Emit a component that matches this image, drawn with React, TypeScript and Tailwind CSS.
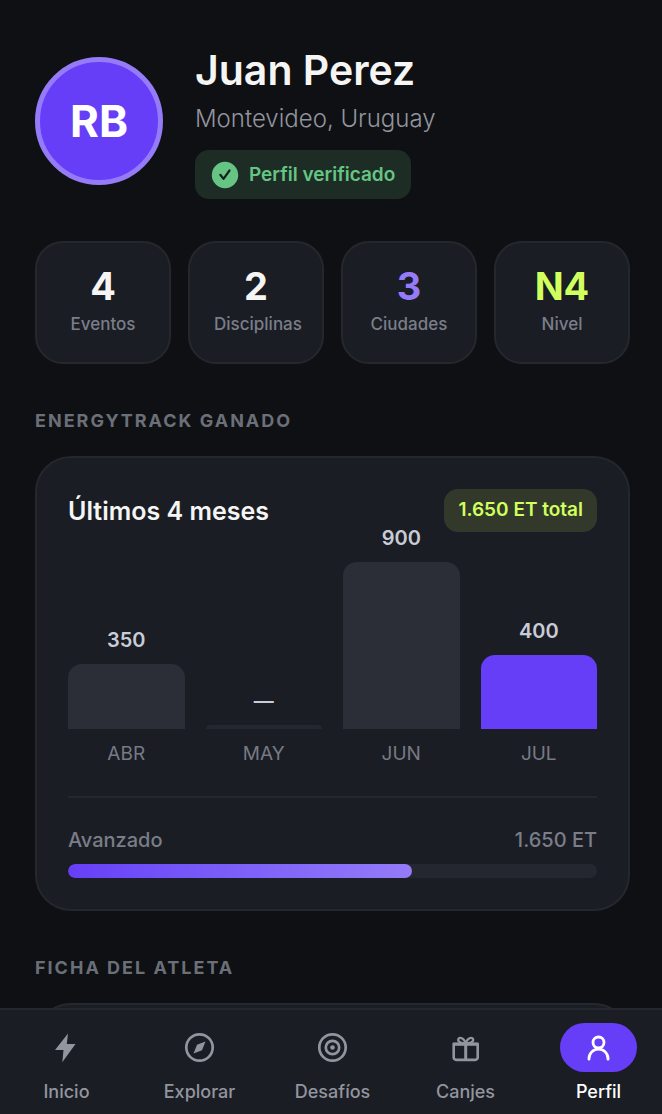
import type { ReactNode } from 'react';

const stats = [
  { value: '4', label: 'Eventos', color: 'text-[#f5f5f3]' },
  { value: '2', label: 'Disciplinas', color: 'text-[#f5f5f3]' },
  { value: '3', label: 'Ciudades', color: 'text-[#957bf8]' },
  { value: 'N4', label: 'Nivel', color: 'text-[#d1ff5e]' },
];

const months = [
  { name: 'ABR', value: '350', height: 65, color: 'bg-[#2b2e36]' },
  { name: 'MAY', value: '—', height: 4, color: 'bg-[#24272f]' },
  { name: 'JUN', value: '900', height: 167, color: 'bg-[#2b2e36]' },
  { name: 'JUL', value: '400', height: 74, color: 'bg-[#673ef8]' },
];

function BoltIcon() {
  return (
    <svg width="32" height="32" viewBox="0 0 32 32" fill="currentColor" aria-hidden="true">
      <path d="M17 1.500 4 18h8.500l-1.200 12.300L24.500 12h-8.700z" />
    </svg>
  );
}

function CompassIcon() {
  return (
    <svg width="32" height="32" viewBox="0 0 32 32" fill="none" aria-hidden="true">
      <circle cx="15.500" cy="15.500" r="13.2" stroke="currentColor" strokeWidth="2.7" />
      <path d="M21.500 9.500 13 12.700 9.500 21.500 18 18.300z" fill="currentColor" />
    </svg>
  );
}

function TargetIcon() {
  return (
    <svg width="32" height="32" viewBox="0 0 32 32" fill="none" stroke="currentColor" strokeWidth="2.7" aria-hidden="true">
      <circle cx="15.500" cy="15.500" r="13.2" />
      <circle cx="15.500" cy="15.500" r="6.7" />
      <circle cx="15.500" cy="15.500" r="2.300" fill="currentColor" stroke="none" />
    </svg>
  );
}

function GiftIcon() {
  return (
    <svg width="32" height="32" viewBox="0 0 32 32" fill="none" stroke="currentColor" strokeLinejoin="round" aria-hidden="true">
      <path d="M3.700 11.700h24v13.800a2.400 2.400 0 0 1-2.400 2.400H6.100a2.400 2.400 0 0 1-2.400-2.400z" strokeWidth="2.600" />
      <path d="M3.700 12.300h24" strokeWidth="3" />
      <path d="M15.700 11.700v16" strokeWidth="3" />
      <path d="M15.700 11.500C10.700 11.500 7.500 9.500 8.300 7 9.500 4.600 14.200 6 15.700 11.500ZM15.700 11.500c5 0 8.200-2 7.400-4.500C21.900 4.600 17.200 6 15.700 11.500Z" strokeWidth="2.200" />
    </svg>
  );
}

function PersonIcon() {
  return (
    <svg width="32" height="32" viewBox="0 0 32 32" fill="none" stroke="currentColor" strokeWidth="2.8" strokeLinecap="round" aria-hidden="true">
      <circle cx="15.500" cy="10.500" r="5.500" />
      <path d="M6 27.200v-.600a9.500 9.500 0 0 1 19 0v.600" />
    </svg>
  );
}

const tabs = [
  { label: 'Inicio', icon: BoltIcon },
  { label: 'Explorar', icon: CompassIcon },
  { label: 'Desafíos', icon: TargetIcon },
  { label: 'Canjes', icon: GiftIcon },
  { label: 'Perfil', icon: PersonIcon, active: true },
];

function SectionTitle({ children }: { children: ReactNode }) {
  return (
    <h2 className="mt-[45px] mb-[23px] text-[18px] leading-6 font-bold tracking-[2px] text-[#6b6f78] uppercase">
      {children}
    </h2>
  );
}

function ProfileHeader() {
  return (
    <header className="flex items-center gap-8">
      <div className="flex size-32 shrink-0 items-center justify-center rounded-full border-[5px] border-[#957bf8] bg-[#673ef8] text-[44px] font-bold text-white">
        RB
      </div>
      <div className="flex flex-col items-start">
        <h1 className="text-[41px] leading-[54px] font-semibold text-[#f5f5f3]">Juan Perez</h1>
        <p className="mt-1 text-[24px] leading-9 font-light text-[#93959e]">Montevideo, Uruguay</p>
        <div className="mt-[13px] flex h-[49px] items-center gap-[10px] rounded-[14px] bg-[#1d2d25] px-4">
          <svg width="28" height="28" viewBox="0 0 28 28" fill="none" aria-hidden="true">
            <circle cx="14" cy="14" r="13.2" fill="#66c584" />
            <path d="m9.300 13.800 3.200 4 6-8.300" stroke="#14231b" strokeWidth="2.200" strokeLinecap="round" strokeLinejoin="round" />
          </svg>
          <span className="text-[19px] leading-6 font-semibold text-[#66c584]">Perfil verificado</span>
        </div>
      </div>
    </header>
  );
}

function EnergyCard() {
  return (
    <section className="rounded-[36px] border-2 border-[#24272e] bg-[#1a1d24] p-[31px]">
      <div className="flex items-center justify-between">
        <h3 className="text-[25px] leading-8 font-semibold text-[#f5f5f3]">Últimos 4 meses</h3>
        <span className="flex h-[43px] items-center rounded-[14px] bg-[#32392b] px-[14px] text-[19px] font-semibold text-[#d1ff5e]">
          1.650 ET total
        </span>
      </div>

      {/* Monthly bars: the tallest value label may rise into the title row */}
      <div className="mt-3 grid h-[185px] grid-cols-4 gap-[21px]">
        {months.map((month) => (
          <div key={month.name} className="flex min-h-0 flex-col justify-end">
            <span className="mb-3 text-center text-[20px] leading-6 font-semibold text-[#c9ccd6]">{month.value}</span>
            <div className={`shrink-0 rounded-t-[14px] ${month.color}`} style={{ height: month.height }} />
          </div>
        ))}
      </div>
      <div className="mt-[13px] grid grid-cols-4 gap-[21px] text-center text-[19px] leading-6 text-[#777a84]">
        {months.map((month) => (
          <span key={month.name}>{month.name}</span>
        ))}
      </div>

      <div className="mt-[30px] border-t-2 border-[#24272e] pt-7">
        <div className="flex justify-between text-[20px] leading-7 font-medium text-[#7b7e88]">
          <span>Avanzado</span>
          <span>1.650 ET</span>
        </div>
        <div className="mt-[10px] h-[14px] overflow-hidden rounded-full bg-[#24272f]">
          <div className="h-full w-[65%] rounded-full bg-linear-to-r from-[#673ef8] to-[#957bf8]" />
        </div>
      </div>
    </section>
  );
}

function TabBar() {
  return (
    <nav className="shrink-0 border-t-2 border-[#24272e] bg-[#1a1d24] pt-[13px] pb-[10px]">
      <div className="-mr-[3px] grid grid-cols-5">
        {tabs.map((tab) => (
          <a
            key={tab.label}
            href="#"
            className={`flex flex-col items-center gap-2 ${tab.active ? 'text-white' : 'text-[#93959e]'}`}
          >
            <span className={`flex h-[49px] w-[77px] items-center justify-center rounded-full ${tab.active ? 'bg-[#673ef8]' : ''}`}>
              <tab.icon />
            </span>
            <span className="text-[18px] leading-6 font-medium">{tab.label}</span>
          </a>
        ))}
      </div>
    </nav>
  );
}

export default function App() {
  return (
    <div className="flex h-screen flex-col overflow-hidden bg-[#0f1014] font-['Inter',sans-serif]">
      <main className="min-h-0 flex-1 overflow-hidden pt-[43px] pr-8 pl-[35px]">
        <ProfileHeader />

        <div className="mt-[42px] grid grid-cols-4 gap-[17px]">
          {stats.map((stat) => (
            <div key={stat.label} className="flex h-[123px] min-w-0 flex-col rounded-[28px] border-2 border-[#24272e] bg-[#1a1d24] px-6 pt-[23px] text-center">
              <span className={`text-[38px] leading-10 font-bold ${stat.color}`}>{stat.value}</span>
              <span className="mt-[6px] text-[17px] leading-6 font-medium whitespace-nowrap text-[#7b7e88]">{stat.label}</span>
            </div>
          ))}
        </div>

        <SectionTitle>Energytrack ganado</SectionTitle>
        <EnergyCard />

        <SectionTitle>Ficha del atleta</SectionTitle>
        <section className="h-40 rounded-[36px] border-2 border-[#24272e] bg-[#1a1d24]" />
      </main>
      <TabBar />
    </div>
  );
}
